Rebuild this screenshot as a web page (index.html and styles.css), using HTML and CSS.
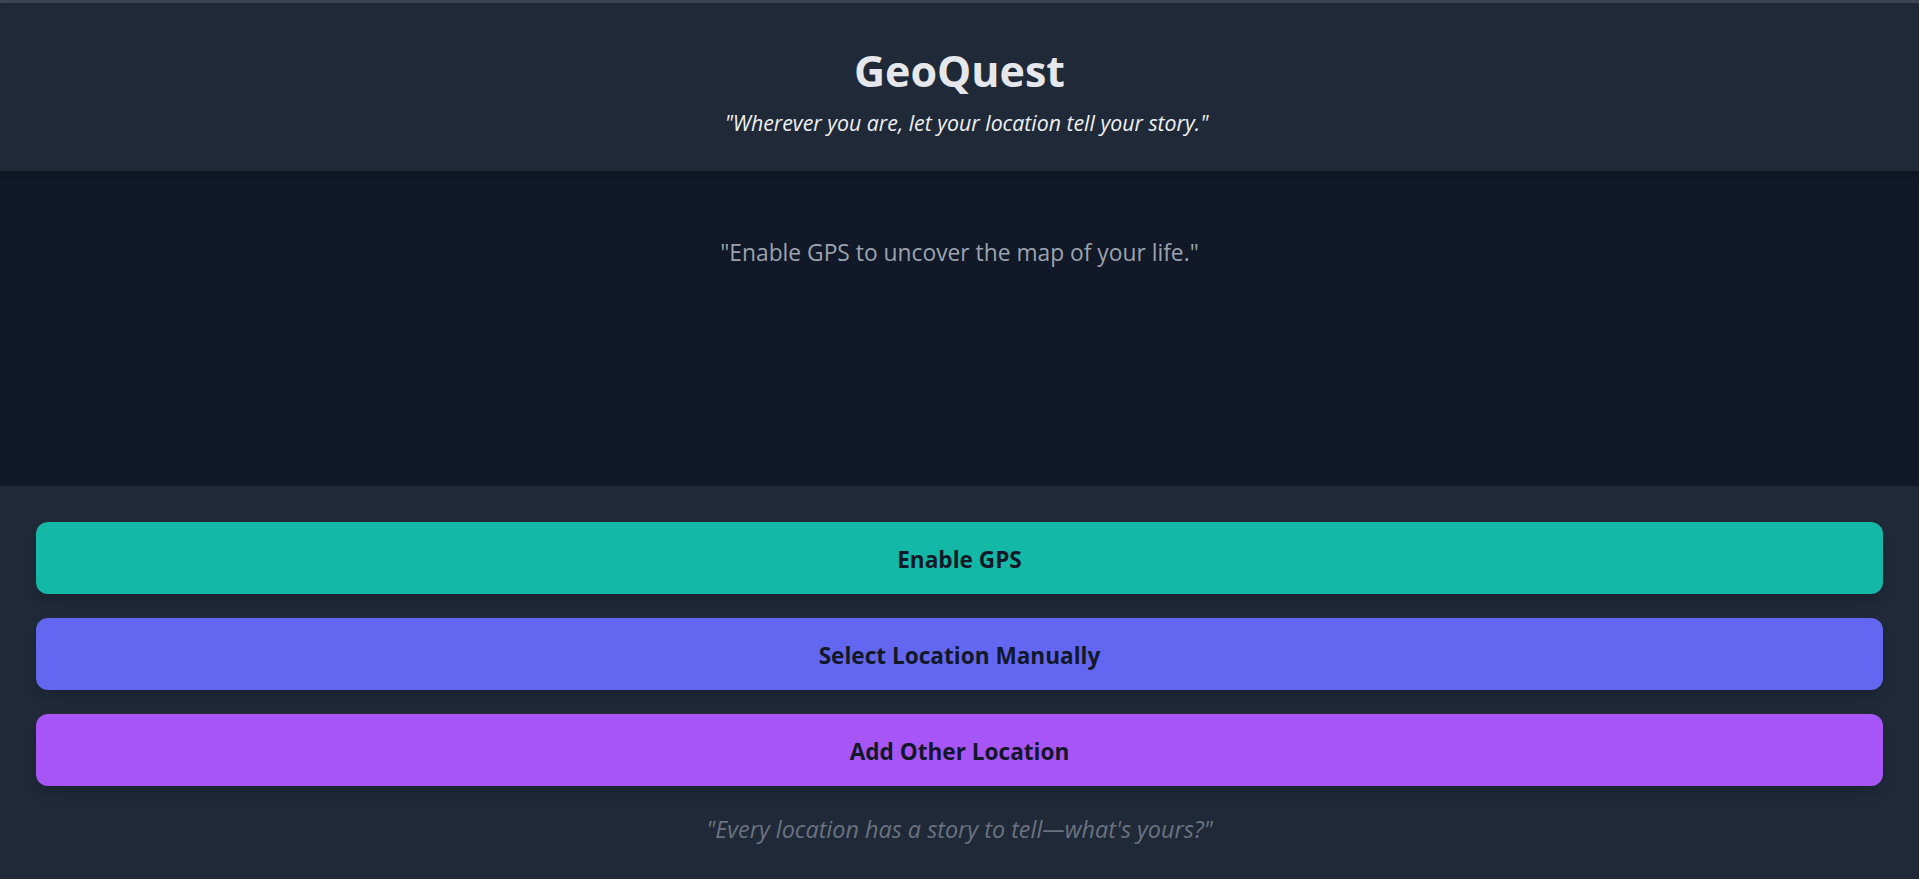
FILE: index.html
```html
<!DOCTYPE html>
<html lang="en">
<head>
<meta charset="utf-8">
<title>GeoQuest</title>
<link rel="stylesheet" href="styles.css">
</head>
<body>
<div class="app">
  <header class="header">
    <h1 class="title">GeoQuest</h1>
    <p class="tagline">"Wherever you are, let your location tell your story."</p>
  </header>
  <main class="map-area">
    <p class="map-hint">"Enable GPS to uncover the map of your life."</p>
  </main>
  <section class="actions">
    <button class="btn btn-gps">Enable GPS</button>
    <button class="btn btn-manual">Select Location Manually</button>
    <button class="btn btn-other">Add Other Location</button>
    <p class="footer-quote">"Every location has a story to tell—what's yours?"</p>
  </section>
</div>
</body>
</html>
```

FILE: styles.css
```css
* { box-sizing: border-box; }
html, body { margin: 0; padding: 0; }
body {
  background: #1f2937;
  font-family: "Open Sans", "Noto Sans", sans-serif;
  height: 879px;
  overflow: hidden;
}
.app {
  border-top: 3px solid #3d4554;
  display: flex;
  flex-direction: column;
}
.header {
  background: #1f2937;
  height: 168px;
  padding-top: 43px;
  text-align: center;
  box-shadow: 0 2px 4px rgba(0,0,0,0.25);
  position: relative;
  z-index: 1;
}
.title {
  margin: 0;
  font-size: 43px;
  line-height: 50px;
  font-weight: 700;
  color: #e5e7eb;
}
.tagline {
  margin: 13px 0 0;
  padding-left: 14px;
  font-size: 21.3px;
  line-height: 28px;
  font-style: italic;
  color: #eef0f3;
}
.map-area {
  background: #111827;
  height: 315px;
  padding-top: 66px;
  text-align: center;
}
.map-hint {
  margin: 0;
  font-size: 22.8px;
  line-height: 32px;
  color: #9ca3af;
}
.actions {
  padding: 36px 36px 0;
  display: flex;
  flex-direction: column;
  gap: 24px;
}
.btn {
  height: 72px;
  border: none;
  border-radius: 12px;
  padding-top: 3px;
  font-family: inherit;
  font-size: 22.6px;
  font-weight: 700;
  color: #111827;
  box-shadow: 0 10px 15px -3px rgba(0,0,0,0.1), 0 4px 6px -4px rgba(0,0,0,0.1);
  cursor: pointer;
}
.btn-gps { background: #14b8a6; }
.btn-manual { background: #6366f1; }
.btn-other { background: #a855f7; }
.footer-quote {
  margin: 4px 0 0;
  text-align: center;
  font-size: 23.4px;
  line-height: 30px;
  font-style: italic;
  color: #6b7280;
}
```
